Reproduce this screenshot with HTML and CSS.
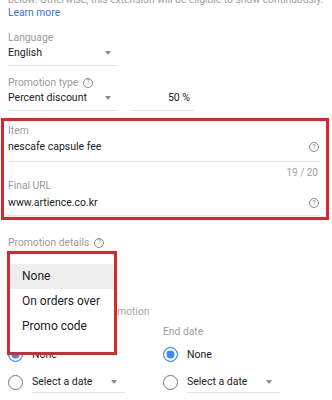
FILE: index.html
```html
<!DOCTYPE html>
<html lang="en">
<head>
    <meta charset="UTF-8">
    <meta name="viewport" content="width=device-width, initial-scale=1.0">
    <title>Promotion extension</title>
    <link rel="stylesheet" href="styles.css">
</head>
<body>
    <div class="page">
        <p class="note">below. Otherwise, this extension will be eligible to show continuously.<br><a href="#" class="link">Learn more</a></p>

        <div class="field">
            <div class="label">Language</div>
            <div class="select select--md"><span>English</span><span class="caret"></span></div>
        </div>

        <div class="field field--tight">
            <div class="label">Promotion type <span class="help">?</span></div>
            <div class="row">
                <div class="select select--md"><span>Percent discount</span><span class="caret"></span></div>
                <div class="amount">50 %</div>
            </div>
        </div>

        <!-- marked area -->
        <div class="mark mark--fields">
            <div class="tf">
                <div class="label">Item</div>
                <div class="tf-value"><span>nescafe capsule fee</span><span class="help">?</span></div>
            </div>
            <div class="counter">19 / 20</div>
            <div class="tf">
                <div class="label">Final URL</div>
                <div class="tf-value tf-value--last"><span>www.artience.co.kr</span><span class="help">?</span></div>
            </div>
        </div>

        <div class="details">
            <div class="label">Promotion details <span class="help">?</span></div>
            <div class="details-body">
                <div class="select select--md"><span>None</span><span class="caret"></span></div>
                <div class="hint">Set dates to run this promotion</div>

                <div class="dates">
                    <div class="date-col">
                        <div class="label">Start date</div>
                        <div class="radio-row"><span class="radio radio--on"></span><span>None</span></div>
                        <div class="radio-row radio-row--select">
                            <span class="radio"></span>
                            <div class="select select--sm"><span>Select a date</span><span class="caret"></span></div>
                        </div>
                    </div>
                    <div class="date-col">
                        <div class="label">End date</div>
                        <div class="radio-row"><span class="radio radio--on"></span><span>None</span></div>
                        <div class="radio-row radio-row--select">
                            <span class="radio"></span>
                            <div class="select select--sm"><span>Select a date</span><span class="caret"></span></div>
                        </div>
                    </div>
                </div>

                <!-- open dropdown, drawn over the fields -->
                <div class="mark mark--menu">
                    <ul class="menu">
                        <li class="menu-item is-active">None</li>
                        <li class="menu-item">On orders over</li>
                        <li class="menu-item">Promo code</li>
                    </ul>
                </div>
            </div>
        </div>
    </div>
</body>
</html>
```

FILE: styles.css
```css
* {
    box-sizing: border-box;
}
html, body {
    margin: 0;
}
body {
    width: 332px;
    height: 400px;
    overflow: hidden;
    font-family: Roboto, "Liberation Sans", sans-serif;
    color: #202124;
    background-color: #ffffff;
}
.page {
    padding-left: 8px;
}
.note {
    margin: -7px 0 0;
    font-size: 10.3px;
    line-height: 13px;
    color: #9e9e9e;
}
.link {
    color: #3b6fd4;
    text-decoration: none;
}
.field {
    margin-top: 12px;
}
.field--tight {
    margin-top: 10px;
}
.label {
    display: flex;
    align-items: center;
    gap: 5px;
    font-size: 10.3px;
    line-height: 13px;
    color: #9a9a9a;
}
.help {
    display: inline-flex;
    align-items: center;
    justify-content: center;
    width: 10px;
    height: 10px;
    border: 1px solid #8a8a8a;
    border-radius: 50%;
    font-size: 7px;
    line-height: 1;
    color: #8a8a8a;
}
.row {
    display: flex;
    gap: 12px;
}
.select {
    display: flex;
    align-items: center;
    justify-content: space-between;
    padding: 2px 7px 6px 0;
    border-bottom: 1px solid #e3e3e3;
    font-size: 10.5px;
    line-height: 13px;
}
.select--md {
    width: 110px;
}
.select--sm {
    width: 93px;
    padding: 4px 8px 4px 0;
}
.caret {
    width: 0;
    height: 0;
    border-left: 3.5px solid transparent;
    border-right: 3.5px solid transparent;
    border-top: 4px solid #8a8a8a;
}
.amount {
    width: 65px;
    padding: 2px 5px 6px 0;
    border-bottom: 1px solid #e3e3e3;
    font-size: 10.5px;
    line-height: 13px;
    text-align: right;
}

/* red annotation boxes */
.mark {
    border: 3px solid #d7282f;
    background-color: #ffffff;
}
.mark--fields {
    width: 328px;
    margin: 7px 0 0 -7px;
    padding: 3px 6px 1px 4px;
}
.tf-value {
    display: flex;
    align-items: center;
    justify-content: space-between;
    padding: 3px 1px 7px 0;
    border-bottom: 1px solid #e3e3e3;
    font-size: 10.5px;
    line-height: 14px;
}
.tf-value--last {
    padding: 4px 1px 5px 0;
}
.counter {
    margin-top: 4px;
    padding-right: 2px;
    font-size: 10px;
    line-height: 13px;
    color: #9e9e9e;
    text-align: right;
}
.details {
    margin-top: 16px;
}
.details-body {
    position: relative;
}
.hint {
    margin-top: 34px;
    font-size: 10.3px;
    line-height: 13px;
    color: #a8a8a8;
}
.dates {
    display: grid;
    grid-template-columns: 155px 1fr;
    margin-top: 7px;
}
.radio-row {
    display: flex;
    align-items: center;
    gap: 9px;
    height: 20px;
    margin-top: 6px;
    font-size: 10.5px;
}
.radio-row--select {
    height: 22px;
    margin-top: 7px;
}
.radio {
    flex: none;
    width: 15px;
    height: 15px;
    border: 1.5px solid #757575;
    border-radius: 50%;
}
.radio--on {
    border-color: #4285f4;
    background-color: #4285f4;
    box-shadow: inset 0 0 0 2.5px #ffffff;
}
.mark--menu {
    position: absolute;
    top: 2px;
    left: -1px;
    width: 110px;
    height: 104px;
}
.menu {
    list-style: none;
    margin: 0;
    padding: 10px 0 0;
}
.menu-item {
    height: 25px;
    padding-left: 12px;
    font-size: 12px;
    line-height: 25px;
    color: #202124;
}
.menu-item.is-active {
    background-color: #eeeeee;
}
```
